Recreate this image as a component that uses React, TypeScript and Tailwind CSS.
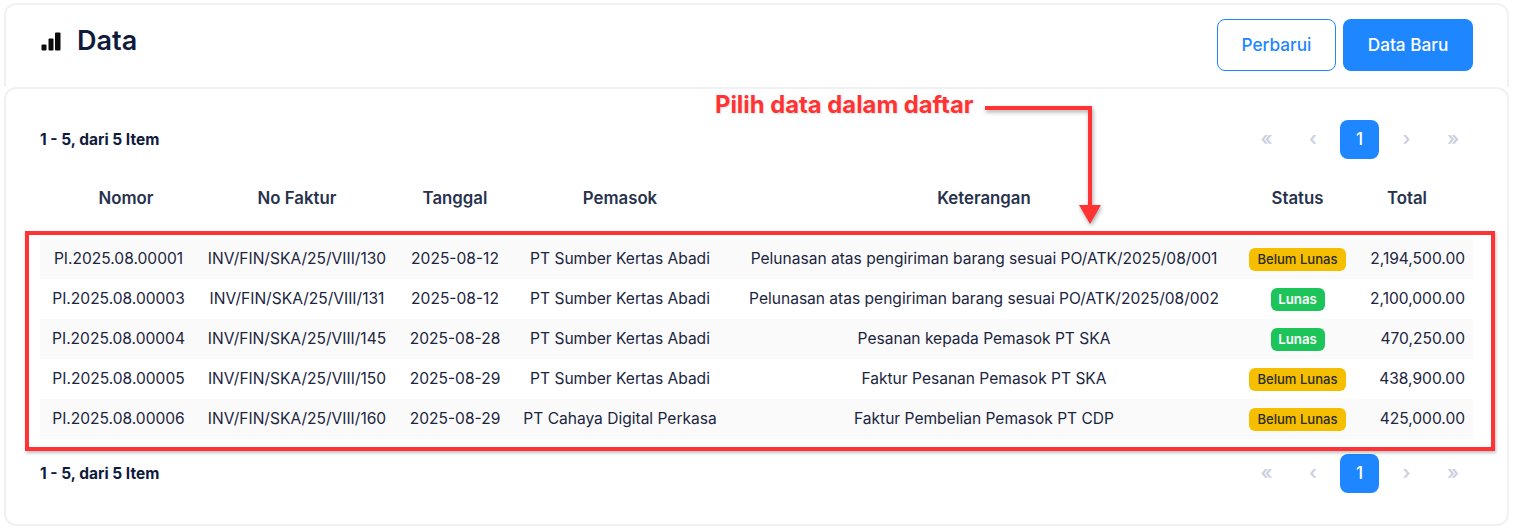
// Halaman daftar pelunasan dengan anotasi panduan berwarna merah.

const rows = [
  { nomor: "PI.2025.08.00001", faktur: "INV/FIN/SKA/25/VIII/130", tanggal: "2025-08-12", pemasok: "PT Sumber Kertas Abadi", ket: "Pelunasan atas pengiriman barang sesuai PO/ATK/2025/08/001", lunas: false, total: "2,194,500.00" },
  { nomor: "PI.2025.08.00003", faktur: "INV/FIN/SKA/25/VIII/131", tanggal: "2025-08-12", pemasok: "PT Sumber Kertas Abadi", ket: "Pelunasan atas pengiriman barang sesuai PO/ATK/2025/08/002", lunas: true, total: "2,100,000.00" },
  { nomor: "PI.2025.08.00004", faktur: "INV/FIN/SKA/25/VIII/145", tanggal: "2025-08-28", pemasok: "PT Sumber Kertas Abadi", ket: "Pesanan kepada Pemasok PT SKA", lunas: true, total: "470,250.00" },
  { nomor: "PI.2025.08.00005", faktur: "INV/FIN/SKA/25/VIII/150", tanggal: "2025-08-29", pemasok: "PT Sumber Kertas Abadi", ket: "Faktur Pesanan Pemasok PT SKA", lunas: false, total: "438,900.00" },
  { nomor: "PI.2025.08.00006", faktur: "INV/FIN/SKA/25/VIII/160", tanggal: "2025-08-29", pemasok: "PT Cahaya Digital Perkasa", ket: "Faktur Pembelian Pemasok PT CDP", lunas: false, total: "425,000.00" },
];

function BarsIcon() {
  return (
    <svg width="20" height="19" viewBox="0 0 20 19" fill="#0b0b0b" aria-hidden="true">
      <rect x="0.5" y="12.5" width="5" height="6" rx="1" />
      <rect x="7.5" y="6.5" width="5" height="12" rx="1" />
      <rect x="14" y="0.5" width="5.5" height="18" rx="1" />
    </svg>
  );
}

function Pager() {
  return (
    <div className="flex h-[39px] items-center justify-between">
      <span className="text-[15.5px] font-bold text-[#0f1b3d]">1 - 5, dari 5 Item</span>
      <div className="mr-[1px] flex items-center gap-[7.5px] text-[19px] font-semibold text-[#cbd0e0]">
        <span className="w-[39px] text-center">«</span>
        <span className="w-[39px] text-center">‹</span>
        <span className="flex h-[39px] w-[39px] items-center justify-center rounded-lg bg-[#1e87ff] text-[17px] font-medium text-white">
          1
        </span>
        <span className="w-[39px] pl-[1px] text-center">›</span>
        <span className="w-[39px] pl-[1px] text-center">»</span>
      </div>
    </div>
  );
}

function Badge({ lunas }: { lunas: boolean }) {
  return lunas ? (
    <span className="inline-flex h-[23px] w-[54px] items-center justify-center rounded-md bg-[#1cc45a] text-[13.3px] font-semibold text-white">
      Lunas
    </span>
  ) : (
    <span className="inline-flex h-[23px] w-[97px] items-center justify-center rounded-md bg-[#f5bf00] text-[13.1px] font-medium text-[#2b2b2b]">
      Belum Lunas
    </span>
  );
}

function Annotation() {
  return (
    <>
      <div className="absolute top-[231px] left-[25px] h-[220px] w-[1470px] border-4 border-[#ff3333] shadow-[1px_2px_3px_rgba(0,0,0,0.25)]" />
      <span className="absolute top-[87px] left-[715px] text-[23.8px] font-bold text-[#ff3333] [text-shadow:1px_1px_2px_rgba(0,0,0,0.12)]">
        Pilih data dalam daftar
      </span>
      <svg
        className="absolute top-[100px] left-[980px] drop-shadow-[1px_2px_2px_rgba(0,0,0,0.35)]"
        width="126"
        height="130"
        viewBox="0 0 126 130"
        fill="none"
      >
        <path d="M5 8 H110 V106" stroke="#ff3333" strokeWidth="4" />
        <path d="M99 105 H121 L110 124 Z" fill="#ff3333" />
      </svg>
    </>
  );
}

export default function App() {
  return (
    <div className="relative h-[527px] w-[1513px] overflow-hidden bg-white pt-[3px] pr-[4px] pl-[4px] font-['Inter',sans-serif] text-[#1b2540]">
      <header className="flex h-[84px] items-start justify-between rounded-t-xl border-2 border-b-0 border-[#f1f1f1] pt-[14px] pr-[34px] pl-[35px]">
        <div className="-mt-[1px] flex items-center gap-[16px] pt-[1px]">
          <BarsIcon />
          <h1 className="text-[27px] leading-[44px] font-semibold text-[#0f1b3d]">Data</h1>
        </div>
        <div className="flex gap-[7px]">
          <button type="button" className="h-[52px] w-[119px] rounded-lg border border-[#1e87ff] text-[17.2px] font-medium text-[#1e87ff]">
            Perbarui
          </button>
          <button type="button" className="h-[52px] w-[130px] rounded-lg bg-[#1e87ff] text-[17.2px] font-medium text-white">
            Data Baru
          </button>
        </div>
      </header>

      <main className="h-[439px] rounded-xl border-2 border-[#f1f1f1] bg-white px-[34px] pt-[31px]">
        <Pager />
        <table className="mt-[19px] w-[1433px] table-fixed border-collapse text-center text-[15.55px] text-[#1b2540]">
          <colgroup>
            <col className="w-[157px]" />
            <col className="w-[200px]" />
            <col className="w-[116px]" />
            <col className="w-[214px]" />
            <col className="w-[514px]" />
            <col className="w-[113px]" />
            <col className="w-[119px]" />
          </colgroup>
          <thead>
            <tr className="h-[61px] text-[16.8px] text-[#27324d]">
              <th className="pb-[19px] pl-[15px] font-semibold">Nomor</th>
              <th className="pb-[19px] font-semibold">No Faktur</th>
              <th className="pb-[19px] font-semibold">Tanggal</th>
              <th className="pb-[19px] font-semibold">Pemasok</th>
              <th className="pb-[19px] font-semibold">Keterangan</th>
              <th className="pb-[19px] font-semibold">Status</th>
              <th className="pr-[13px] pb-[19px] font-semibold">Total</th>
            </tr>
          </thead>
          <tbody>
            {rows.map((r, i) => (
              <tr key={r.nomor} className={`h-[40px] ${i % 2 === 0 ? "bg-[#fafafa]" : "bg-white"}`}>
                <td>{r.nomor}</td>
                <td>{r.faktur}</td>
                <td>{r.tanggal}</td>
                <td>{r.pemasok}</td>
                <td>{r.ket}</td>
                <td>
                  <Badge lunas={r.lunas} />
                </td>
                <td className="pr-[8px] text-right">{r.total}</td>
              </tr>
            ))}
          </tbody>
        </table>
        <div className="mt-[15px]">
          <Pager />
        </div>
      </main>

      <Annotation />
    </div>
  );
}
